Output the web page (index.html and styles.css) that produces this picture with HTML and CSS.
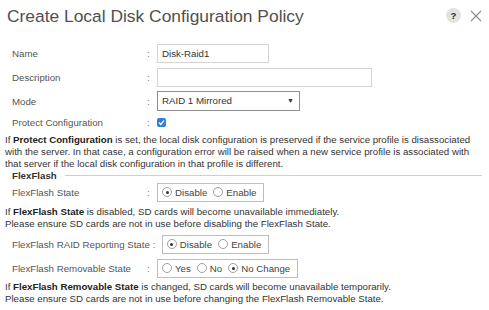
FILE: index.html
```html
<!DOCTYPE html>
<html>
<head>
<meta charset="utf-8">
<link rel="stylesheet" href="styles.css">
</head>
<body>
<div class="dialog">
  <header class="titlebar">
    <h1 class="title">Create Local Disk Configuration Policy</h1>
    <div class="tools">
      <span class="help">?</span>
      <svg class="close" width="12" height="12" viewBox="0 0 12 12"><path d="M1 1 L11 11 M11 1 L1 11" stroke="#8a8a8a" stroke-width="1.1" fill="none"/></svg>
    </div>
  </header>

  <div class="row r24">
    <span class="label">Name</span><span class="colon">:</span>
    <div class="field name">Disk-Raid1</div>
  </div>
  <div class="row r24">
    <span class="label">Description</span><span class="colon">:</span>
    <div class="field desc"></div>
  </div>
  <div class="row r24">
    <span class="label">Mode</span><span class="colon">:</span>
    <div class="field select">RAID 1 Mirrored<span class="arrow">&#9660;</span></div>
  </div>
  <div class="row r18">
    <span class="label">Protect Configuration</span><span class="colon">:</span>
    <span class="checkbox"><svg width="9" height="9" viewBox="0 0 9 9"><path d="M2 4.6 L3.8 6.4 L7 2.6" stroke="#fff" stroke-width="1.4" fill="none"/></svg></span>
  </div>
  <p class="note p1">If <b>Protect Configuration</b> is set, the local disk configuration is preserved if the service profile is disassociated with the server. In that case, a configuration error will be raised when a new service profile is associated with that server if the local disk configuration in that profile is different.</p>

  <div class="section"><span class="section-title">FlexFlash</span><span class="rule"></span></div>

  <div class="row r22">
    <span class="label">FlexFlash State</span><span class="colon">:</span>
    <div class="radios">
      <span class="opt"><span class="radio on"></span>Disable</span>
      <span class="opt"><span class="radio"></span>Enable</span>
    </div>
  </div>
  <p class="note p2">If <b>FlexFlash State</b> is disabled, SD cards will become unavailable immediately.<br>Please ensure SD cards are not in use before disabling the FlexFlash State.</p>

  <div class="row r24 raid">
    <span class="label tight">FlexFlash RAID Reporting State</span><span class="colon short">:</span>
    <div class="radios">
      <span class="opt"><span class="radio on"></span>Disable</span>
      <span class="opt"><span class="radio"></span>Enable</span>
    </div>
  </div>
  <div class="row r24">
    <span class="label">FlexFlash Removable State</span><span class="colon">:</span>
    <div class="radios">
      <span class="opt"><span class="radio"></span>Yes</span>
      <span class="opt"><span class="radio"></span>No</span>
      <span class="opt"><span class="radio on"></span>No Change</span>
    </div>
  </div>
  <p class="note p3">If <b>FlexFlash Removable State</b> is changed, SD cards will become unavailable temporarily.<br>Please ensure SD cards are not in use before changing the FlexFlash Removable State.</p>
</div>
</body>
</html>
```

FILE: styles.css
```css
html, body {
  margin: 0;
  padding: 0;
  background: #fff;
}
body {
  font-family: "Liberation Sans", Arial, sans-serif;
  font-size: 9.7px;
  color: #444;
}
.dialog {
  width: 489px;
  height: 310px;
  overflow: hidden;
}
.titlebar {
  height: 41px;
  display: flex;
  align-items: flex-start;
  justify-content: space-between;
  padding: 0 7px 0 7px;
  box-sizing: border-box;
}
.title {
  margin: 6px 0 0 0;
  font-size: 17.4px;
  font-weight: normal;
  color: #505050;
  line-height: 20px;
}
.tools {
  display: flex;
  align-items: center;
  gap: 9px;
  margin-top: 8px;
}
.help {
  width: 15px;
  height: 15px;
  border-radius: 50%;
  background: #e2e2e2;
  color: #2a2a2a;
  font-weight: bold;
  font-size: 9.5px;
  line-height: 15px;
  text-align: center;
}
.close {
  display: block;
}
.row {
  display: flex;
  align-items: center;
  padding-left: 12px;
}
.r24 { height: 24px; }
.r22 { height: 22px; }
.r18 { height: 18px; }
.label {
  flex: none;
  width: 135px;
  color: #555;
  white-space: nowrap;
}
.label.tight {
  width: auto;
  margin-right: 3px;
}
.colon {
  flex: none;
  width: 10px;
  color: #777;
}
.colon.short {
  width: 9px;
}
.field {
  box-sizing: border-box;
  height: 19px;
  border: 1px solid #d4d4d4;
  line-height: 17px;
  padding-left: 4px;
  color: #333;
}
.name { width: 112px; }
.desc { width: 215px; }
.select {
  width: 143px;
  height: 20px;
  border-color: #8f8f8f;
  position: relative;
  line-height: 18px;
}
.arrow {
  position: absolute;
  right: 5px;
  top: 0;
  font-size: 7px;
  color: #333;
}
.checkbox {
  width: 9px;
  height: 9px;
  border-radius: 2px;
  background: #2f7fd8;
  display: block;
}
.checkbox svg { display: block; }
.note {
  margin: 2px 0 0 5px;
  width: 480px;
  line-height: 12px;
  color: #333;
}
.note b { color: #222; }
.p1 { margin-top: 3px; height: 36px; }
.section {
  height: 12px;
  margin-top: -1px;
  display: flex;
  align-items: center;
  padding-left: 12px;
  gap: 8px;
}
.section-title {
  font-weight: bold;
  color: #333;
}
.rule {
  flex: 1;
  height: 1px;
  background: #cfcfcf;
  margin-right: 7px;
}
.radios {
  display: flex;
  align-items: center;
  border: 1px solid #bdbdbd;
  height: 19px;
  box-sizing: border-box;
  padding: 0 7px 0 4px;
  gap: 6px;
  color: #444;
}
.opt {
  display: flex;
  align-items: center;
  gap: 3px;
}
.radio {
  width: 10px;
  height: 10px;
  border: 1px solid #a0a0a0;
  border-radius: 50%;
  box-sizing: border-box;
  position: relative;
  background: #fff;
}
.radio.on::after {
  content: "";
  position: absolute;
  left: 2.5px;
  top: 2.5px;
  width: 3px;
  height: 3px;
  border-radius: 50%;
  background: #333;
}
.p2 { margin-top: 3px; height: 24px; }
.raid { margin-top: 2px; }
.p3 { margin-top: 1px; }
```
